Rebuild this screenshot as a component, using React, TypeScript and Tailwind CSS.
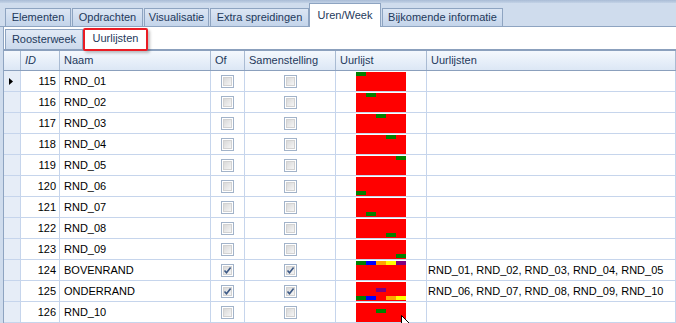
import React from "react";

type Seg = { x: number; y: number; c: string };

interface Row {
  id: number;
  naam: string;
  checked?: boolean;
  lijsten?: string;
  segs: Seg[];
}

const G = "#008000";
const B = "#0000ff";
const O = "#ffa500";
const Y = "#ffff00";
const P = "#800080";

const ROWS: Row[] = [
  { id: 115, naam: "RND_01", segs: [{ x: 0, y: 0, c: G }] },
  { id: 116, naam: "RND_02", segs: [{ x: 10, y: 0, c: G }] },
  { id: 117, naam: "RND_03", segs: [{ x: 20, y: 0, c: G }] },
  { id: 118, naam: "RND_04", segs: [{ x: 30, y: 0, c: G }] },
  { id: 119, naam: "RND_05", segs: [{ x: 40, y: 0, c: G }] },
  { id: 120, naam: "RND_06", segs: [{ x: 0, y: 14, c: G }] },
  { id: 121, naam: "RND_07", segs: [{ x: 10, y: 14, c: G }] },
  { id: 122, naam: "RND_08", segs: [{ x: 30, y: 14, c: G }] },
  { id: 123, naam: "RND_09", segs: [{ x: 40, y: 14, c: G }] },
  {
    id: 124,
    naam: "BOVENRAND",
    checked: true,
    lijsten: "RND_01, RND_02, RND_03, RND_04, RND_05",
    segs: [
      { x: 0, y: 0, c: G },
      { x: 10, y: 0, c: B },
      { x: 20, y: 0, c: O },
      { x: 30, y: 0, c: Y },
      { x: 40, y: 0, c: P }
    ]
  },
  {
    id: 125,
    naam: "ONDERRAND",
    checked: true,
    lijsten: "RND_06, RND_07, RND_08, RND_09, RND_10",
    segs: [
      { x: 20, y: 6, c: P },
      { x: 0, y: 14, c: G },
      { x: 10, y: 14, c: B },
      { x: 30, y: 14, c: O },
      { x: 40, y: 14, c: Y }
    ]
  },
  { id: 126, naam: "RND_10", segs: [{ x: 20, y: 6, c: G }] }
];

const TOP_TABS = [
  { label: "Elementen", w: "w-[66px]" },
  { label: "Opdrachten", w: "w-[71px]" },
  { label: "Visualisatie", w: "w-[65px]" },
  { label: "Extra spreidingen", w: "w-[99px]" },
  { label: "Uren/Week", w: "w-[72px]", active: true },
  { label: "Bijkomende informatie", w: "w-[121px]" }
];

const HEAD = "flex h-full items-center border-r border-[#a9bbd3] pl-[4px]";
const CELL = "flex h-full items-center border-r border-[#c6d5ec]";

function CheckBox({ checked }: { checked?: boolean }) {
  return (
    <div className="relative flex h-[13px] w-[13px] items-center justify-center border border-[#a2b3c9] bg-white">
      <div className="h-[9px] w-[9px] border border-[#d2d2d2] bg-linear-to-br from-[#d9d9d9] to-[#f5f5f5]" />
      {checked && (
        <svg className="absolute left-0 top-0" width="11" height="11" viewBox="0 0 11 11">
          <path d="M2.5 5.5 L4.5 7.8 L8.6 2.6" fill="none" stroke="#3e5a86" strokeWidth="1.6" />
        </svg>
      )}
    </div>
  );
}

function Uurlijst({ segs }: { segs: Seg[] }) {
  return (
    <div className="relative h-[19px] w-[50px] bg-[#ff0000]">
      {segs.map((s, i) => (
        <div
          key={i}
          className="absolute h-[4px] w-[10px]"
          style={{ left: s.x, top: s.y, background: s.c }}
        />
      ))}
    </div>
  );
}

export default function App() {
  return (
    <div className="relative h-[323px] w-[676px] overflow-hidden bg-[#cfdced] font-['Liberation_Sans',Arial,sans-serif] text-[11px]">
      <div className="h-[3px] bg-linear-to-b from-[#a9bcd6] to-[#c3d2e6]" />

      {/* hoofdtabs */}
      <div className="flex h-[24px] items-end gap-px border-b border-[#8ea4c1] pl-[5px]">
        {TOP_TABS.map((t) =>
          t.active ? (
            <div
              key={t.label}
              className={`${t.w} -mb-px -ml-px flex h-[24px] items-center justify-center border border-b-0 border-[#8ea4c1] bg-white text-[#1e395b]`}
            >
              {t.label}
            </div>
          ) : (
            <div
              key={t.label}
              className={`${t.w} flex h-[18px] items-center justify-center border border-b-0 border-[#8ea4c1] bg-linear-to-b from-[#dce6f4] to-[#c3d4ea] text-[#1e395b]`}
            >
              {t.label}
            </div>
          )
        )}
      </div>

      <div className="ml-[3px] border-l border-[#8ea4c1] bg-white">
        {/* subtabs */}
        <div className="flex h-[22px] items-end pl-px">
          <div className="flex h-[20px] w-[78px] items-center justify-center border border-b-0 border-[#8ea4c1] bg-linear-to-b from-[#e2eaf6] to-[#ccdaec] text-[#1e395b]">
            Roosterweek
          </div>
          <div className="relative flex h-[21px] w-[65px] items-center justify-center text-[#1e395b]">
            Uurlijsten
            <span className="absolute -bottom-[2px] left-0 right-0 top-0 rounded-[2px] border-2 border-[#ea1c24] shadow-[2px_2px_3px_rgba(0,0,0,0.25)]" />
          </div>
        </div>

        {/* grid */}
        <div className="border-t-2 border-[#8ba0bd]">
          <div className="flex h-[20px] border-b border-[#8ba0bd] bg-linear-to-b from-[#f4f8fd] to-[#dce7f5] text-[#1e395b]">
            <div className="h-full w-[17px] border-r border-[#a9bbd3]" />
            <div className={`${HEAD} w-[39px] italic`}>ID</div>
            <div className={`${HEAD} w-[151px]`}>Naam</div>
            <div className={`${HEAD} w-[34px]`}>Of</div>
            <div className={`${HEAD} w-[91px]`}>Samenstelling</div>
            <div className={`${HEAD} w-[91px]`}>Uurlijst</div>
            <div className={`${HEAD} w-[249px] border-[#8ba0bd]`}>Uurlijsten</div>
          </div>

          {ROWS.map((r, i) => (
            <div key={r.id} className="flex h-[21px] border-b border-[#c6d5ec] text-black">
              <div className="flex h-full w-[17px] items-center border-r border-[#c6d5ec] bg-[#e6edf7] pl-[5px]">
                {i === 0 && (
                  <svg width="4" height="7" viewBox="0 0 4 7">
                    <polygon points="0,0 4,3.5 0,7" fill="#000" />
                  </svg>
                )}
              </div>
              <div className={`${CELL} w-[39px] justify-end pr-[3px]`}>{r.id}</div>
              <div className={`${CELL} w-[151px] pl-[4px]`}>{r.naam}</div>
              <div className={`${CELL} w-[34px] justify-center`}>
                <CheckBox checked={r.checked} />
              </div>
              <div className={`${CELL} w-[91px] justify-center`}>
                <CheckBox checked={r.checked} />
              </div>
              <div className={`${CELL} w-[91px] items-start justify-center pt-px`}>
                <Uurlijst segs={r.segs} />
              </div>
              <div className={`${CELL} w-[249px] pl-[1px]`}>{r.lijsten}</div>
            </div>
          ))}
        </div>
      </div>

      {/* muiscursor */}
      <svg className="absolute left-[401px] top-[315px]" width="12" height="19" viewBox="0 0 12 19">
        <path d="M0.5 0.5 L0.5 15 L4 11.6 L6.6 17.5 L8.6 16.6 L6 10.8 L10.8 10.8 Z" fill="#fff" stroke="#000" strokeWidth="1" />
      </svg>
    </div>
  );
}
